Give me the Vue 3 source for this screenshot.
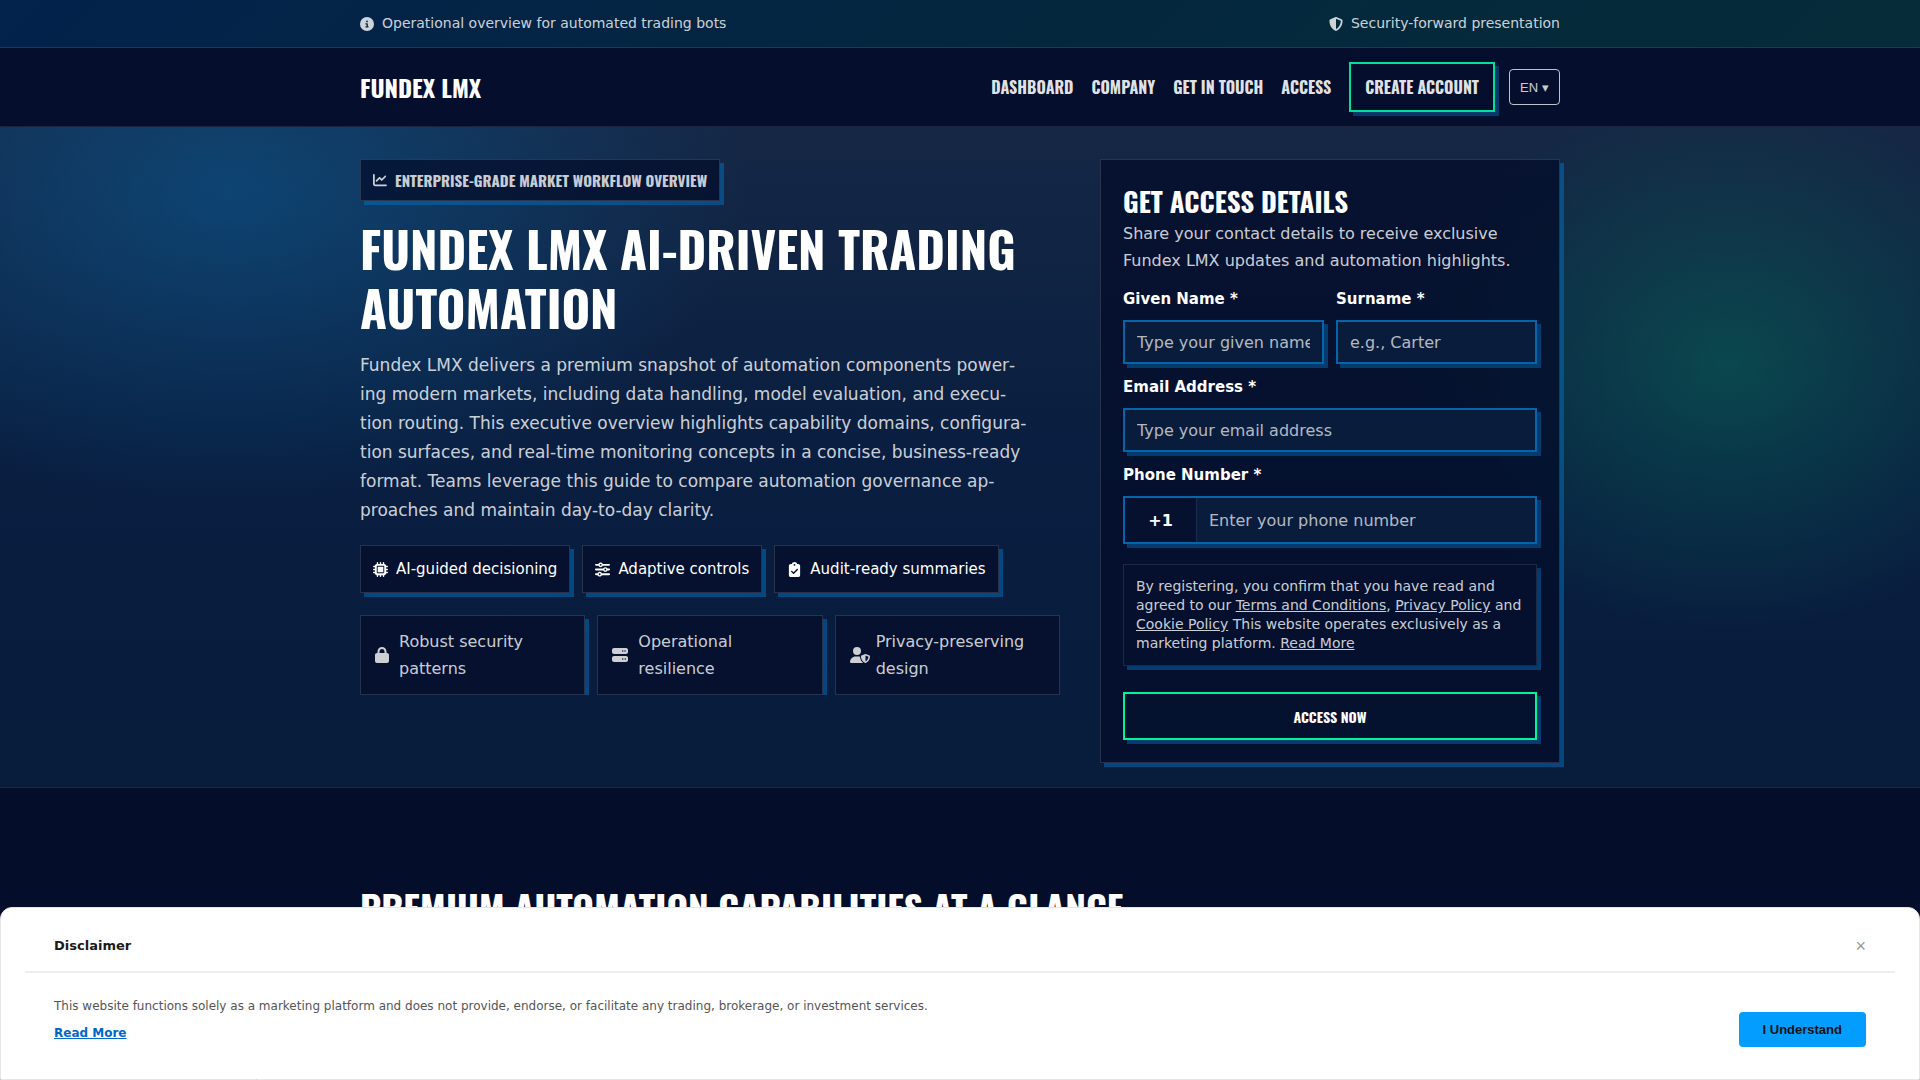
<template>
  <div class="page">
    <div class="topbar">
      <div class="container topbar__inner">
        <span class="topbar__item">
          <svg class="topbar__icon" viewBox="0 0 512 512" aria-hidden="true"><path :d="icons.info" /></svg>
          Operational overview for automated trading bots
        </span>
        <span class="topbar__item">
          <svg class="topbar__icon" viewBox="0 0 512 512" aria-hidden="true"><path :d="icons.shield" /></svg>
          Security-forward presentation
        </span>
      </div>
    </div>

    <header class="header">
      <div class="container header__inner">
        <a class="header__brand" href="#">Fundex LMX</a>
        <nav class="nav" aria-label="Main">
          <a v-for="link in navLinks" :key="link" class="nav__link" href="#">{{ link }}</a>
          <a class="nav__cta" href="#access">Create account</a>
          <select v-model="locale" class="nav__lang" aria-label="Language">
            <option value="en">EN ▾</option>
          </select>
        </nav>
      </div>
    </header>

    <main>
      <section class="hero">
        <div class="container hero__grid">
          <div class="intro">
            <span class="intro__badge">
              <svg class="intro__badge-icon" viewBox="0 0 512 512" aria-hidden="true"><path :d="icons.chart" /></svg>
              Enterprise-grade market workflow overview
            </span>
            <h1 class="intro__title">Fundex LMX AI-Driven Trading Automation</h1>
            <p class="intro__text">
              Fundex LMX delivers a premium snapshot of automation components power&shy;ing modern markets,
              including data handling, model evaluation, and execu&shy;tion routing. This executive overview
              highlights capability domains, configura&shy;tion surfaces, and real-time monitoring concepts in a
              concise, business-ready format. Teams leverage this guide to compare automation governance
              ap&shy;proaches and maintain day-to-day clarity.
            </p>

            <ul class="tags">
              <li v-for="tag in tags" :key="tag.label" class="tags__item">
                <svg class="tags__icon" :viewBox="tag.box" aria-hidden="true"><path :d="tag.path" /></svg>
                {{ tag.label }}
              </li>
            </ul>

            <ul class="assurances">
              <li v-for="item in assurances" :key="item.label" class="assurances__item">
                <svg
                  class="assurances__icon"
                  :class="`assurances__icon--${item.size}`"
                  :viewBox="item.box"
                  aria-hidden="true"
                ><path :d="item.path" /></svg>
                <span>{{ item.label }}</span>
              </li>
            </ul>
          </div>

          <div id="access" class="card">
            <h2 class="card__title">Get Access Details</h2>
            <p class="card__text">Share your contact details to receive exclusive Fundex LMX updates and automation highlights.</p>

            <form class="form" @submit.prevent>
              <div class="form__row">
                <div class="field">
                  <label class="field__label" for="first-name">Given Name *</label>
                  <input id="first-name" v-model="form.firstName" class="field__input" type="text" placeholder="Type your given name" />
                </div>
                <div class="field">
                  <label class="field__label" for="last-name">Surname *</label>
                  <input id="last-name" v-model="form.lastName" class="field__input" type="text" placeholder="e.g., Carter" />
                </div>
              </div>
              <div class="field">
                <label class="field__label" for="email">Email Address *</label>
                <input id="email" v-model="form.email" class="field__input" type="email" placeholder="Type your email address" />
              </div>
              <div class="field">
                <label class="field__label" for="phone">Phone Number *</label>
                <div class="phone">
                  <span class="phone__code">+1</span>
                  <input id="phone" v-model="form.phone" class="phone__input" type="tel" placeholder="Enter your phone number" />
                </div>
              </div>

              <p class="consent">
                By registering, you confirm that you have read and agreed to our
                <a href="#">Terms and Conditions</a>, <a href="#">Privacy Policy</a> and
                <a href="#">Cookie Policy</a> This website operates exclusively as a marketing platform.
                <a href="#">Read More</a>
              </p>

              <button class="form__submit" type="submit">Access now</button>
            </form>
          </div>
        </div>
      </section>

      <section class="features">
        <div class="container">
          <h2 class="features__title">Premium automation capabilities at a glance</h2>
        </div>
      </section>
    </main>

    <aside v-if="showDisclaimer" class="disclaimer" aria-labelledby="disclaimer-title">
      <div class="disclaimer__head">
        <strong id="disclaimer-title" class="disclaimer__title">Disclaimer</strong>
        <button class="disclaimer__close" type="button" aria-label="Close" @click="showDisclaimer = false">×</button>
      </div>
      <div class="disclaimer__body">
        <div>
          <p class="disclaimer__text">
            This website functions solely as a marketing platform and does not provide, endorse, or facilitate any
            trading, brokerage, or investment services.
          </p>
          <a class="disclaimer__more" href="#">Read More</a>
        </div>
        <button class="disclaimer__accept" type="button" @click="showDisclaimer = false">I Understand</button>
      </div>
    </aside>
  </div>
</template>

<script setup>
import { reactive, ref } from 'vue'

const icons = {
  info: 'M256 512A256 256 0 1 0 256 0a256 256 0 1 0 0 512zM216 336h24V272H216c-13.3 0-24-10.7-24-24s10.7-24 24-24h48c13.3 0 24 10.7 24 24v88h8c13.3 0 24 10.7 24 24s-10.7 24-24 24H216c-13.3 0-24-10.7-24-24s10.7-24 24-24zm40-208a32 32 0 1 1 0 64 32 32 0 1 1 0-64z',
  shield: 'M256 0c4.6 0 9.2 1 13.4 2.9L457.7 82.8c22 9.3 38.4 31 38.3 57.2c-.5 99.2-41.3 280.7-213.6 363.2c-16.7 8-36.1 8-52.8 0C57.3 420.7 16.5 239.2 16 140c-.1-26.2 16.3-47.9 38.3-57.2L242.7 2.9C246.8 1 251.4 0 256 0zm0 66.8V444.8C394 378 431.1 230.1 432 141.4L256 66.8z',
  chart: 'M64 64c0-17.7-14.3-32-32-32S0 46.3 0 64V400c0 44.2 35.8 80 80 80H480c17.7 0 32-14.3 32-32s-14.3-32-32-32H80c-8.8 0-16-7.2-16-16V64zm406.6 86.6c12.5-12.5 12.5-32.8 0-45.3s-32.8-12.5-45.3 0L320 210.7l-57.4-57.4c-12.5-12.5-32.8-12.5-45.3 0l-112 112c-12.5 12.5-12.5 32.8 0 45.3s32.8 12.5 45.3 0L240 221.3l57.4 57.4c12.5 12.5 32.8 12.5 45.3 0l128-128z'
}

const navLinks = ['Dashboard', 'Company', 'Get in touch', 'Access']

const tags = [
  {
    label: 'AI-guided decisioning',
    box: '0 0 512 512',
    path: 'M176 24c0-13.3-10.7-24-24-24s-24 10.7-24 24V64c-35.3 0-64 28.7-64 64H24c-13.3 0-24 10.7-24 24s10.7 24 24 24H64v56H24c-13.3 0-24 10.7-24 24s10.7 24 24 24H64v56H24c-13.3 0-24 10.7-24 24s10.7 24 24 24H64c0 35.3 28.7 64 64 64v40c0 13.3 10.7 24 24 24s24-10.7 24-24V448h56v40c0 13.3 10.7 24 24 24s24-10.7 24-24V448h56v40c0 13.3 10.7 24 24 24s24-10.7 24-24V448c35.3 0 64-28.7 64-64h40c13.3 0 24-10.7 24-24s-10.7-24-24-24H448V280h40c13.3 0 24-10.7 24-24s-10.7-24-24-24H448V176h40c13.3 0 24-10.7 24-24s-10.7-24-24-24H448c0-35.3-28.7-64-64-64V24c0-13.3-10.7-24-24-24s-24 10.7-24 24V64H280V24c0-13.3-10.7-24-24-24s-24 10.7-24 24V64H176V24zM160 128H352c17.7 0 32 14.3 32 32V352c0 17.7-14.3 32-32 32H160c-17.7 0-32-14.3-32-32V160c0-17.7 14.3-32 32-32zm192 32H160V352H352V160z'
  },
  {
    label: 'Adaptive controls',
    box: '0 0 512 512',
    path: 'M0 416c0 17.7 14.3 32 32 32l54.7 0c12.3 28.3 40.5 48 73.3 48s61-19.7 73.3-48L480 448c17.7 0 32-14.3 32-32s-14.3-32-32-32l-246.7 0c-12.3-28.3-40.5-48-73.3-48s-61 19.7-73.3 48L32 384c-17.7 0-32 14.3-32 32zm128 0a32 32 0 1 1 64 0 32 32 0 1 1 -64 0zM320 256a32 32 0 1 1 64 0 32 32 0 1 1 -64 0zm32-80c-32.8 0-61 19.7-73.3 48L32 224c-17.7 0-32 14.3-32 32s14.3 32 32 32l246.7 0c12.3 28.3 40.5 48 73.3 48s61-19.7 73.3-48l54.7 0c17.7 0 32-14.3 32-32s-14.3-32-32-32l-54.7 0c-12.3-28.3-40.5-48-73.3-48zM192 128a32 32 0 1 1 0-64 32 32 0 1 1 0 64zm73.3-64C253 35.7 224.8 16 192 16s-61 19.7-73.3 48L32 64C14.3 64 0 78.3 0 96s14.3 32 32 32l86.7 0c12.3 28.3 40.5 48 73.3 48s61-19.7 73.3-48L480 128c17.7 0 32-14.3 32-32s-14.3-32-32-32L265.3 64z'
  },
  {
    label: 'Audit-ready summaries',
    box: '0 0 384 512',
    path: 'M192 0c-41.8 0-77.4 26.7-90.5 64H64C28.7 64 0 92.7 0 128V448c0 35.3 28.7 64 64 64H320c35.3 0 64-28.7 64-64V128c0-35.3-28.7-64-64-64H282.5C269.4 26.7 233.8 0 192 0zm0 64a32 32 0 1 1 0 64 32 32 0 1 1 0-64zM305 273L177 401c-9.4 9.4-24.6 9.4-33.9 0L79 337c-9.4-9.4-9.4-24.6 0-33.9s24.6-9.4 33.9 0l47 47L271 239c9.4-9.4 24.6-9.4 33.9 0s9.4 24.6 0 33.9z'
  }
]

const assurances = [
  {
    label: 'Robust security patterns',
    size: 'narrow',
    box: '0 0 448 512',
    path: 'M144 144v48H304V144c0-44.2-35.8-80-80-80s-80 35.8-80 80zM80 192V144C80 64.5 144.5 0 224 0s144 64.5 144 144v48h16c35.3 0 64 28.7 64 64V448c0 35.3-28.7 64-64 64H64c-35.3 0-64-28.7-64-64V256c0-35.3 28.7-64 64-64H80z'
  },
  {
    label: 'Operational resilience',
    size: 'regular',
    box: '0 0 512 512',
    path: 'M64 32C28.7 32 0 60.7 0 96v64c0 35.3 28.7 64 64 64H448c35.3 0 64-28.7 64-64V96c0-35.3-28.7-64-64-64H64zm280 72a24 24 0 1 1 0 48 24 24 0 1 1 0-48zm48 24a24 24 0 1 1 48 0 24 24 0 1 1 -48 0zM64 288c-35.3 0-64 28.7-64 64v64c0 35.3 28.7 64 64 64H448c35.3 0 64-28.7 64-64V352c0-35.3-28.7-64-64-64H64zm280 72a24 24 0 1 1 0 48 24 24 0 1 1 0-48zm56 24a24 24 0 1 1 48 0 24 24 0 1 1 -48 0z'
  },
  {
    label: 'Privacy-preserving design',
    size: 'wide',
    box: '0 0 640 512',
    path: 'M224 256A128 128 0 1 0 224 0a128 128 0 1 0 0 256zm-45.7 48C79.8 304 0 383.8 0 482.3C0 498.7 13.3 512 29.7 512H418.3c1.8 0 3.5-.2 5.3-.5c-76.3-55.1-99.8-141-103.1-200.2c-16.1-4.8-33.1-7.3-50.7-7.3H178.3zm308.8-78.3l-120 48C358 277.4 352 286.2 352 296c0 63.3 25.9 168.8 134.8 214.2c5.9 2.5 12.6 2.5 18.5 0C614.1 464.8 640 359.3 640 296c0-9.8-6-18.6-15.1-22.3l-120-48c-5.7-2.3-12.1-2.3-17.8 0zM591.4 312c-3.9 50.7-27.2 116.7-95.4 149.7V273.8L591.4 312z'
  }
]

const locale = ref('en')
const showDisclaimer = ref(true)

const form = reactive({
  firstName: '',
  lastName: '',
  email: '',
  phone: ''
})
</script>

<style>
body {
  margin: 0;
  background: #040e2b;
}
</style>

<style scoped>
.page {
  --font-body: 'DejaVu Sans', sans-serif;
  --font-head: 'Oswald', 'Liberation Sans Narrow', 'Arial Narrow', sans-serif;
  --line: rgba(255, 255, 255, 0.14);
  --muted: rgba(255, 255, 255, 0.8);
  --panel: rgba(4, 14, 43, 0.75);
  --blue: #0466a8;
  --green: #00f59b;
  --shadow: 4px 4px 0 rgba(0, 120, 200, 0.48);
  min-height: 100vh;
  font-family: var(--font-body);
  font-size: 16px;
  line-height: 27px;
  color: #fff;
}

*,
*::before,
*::after {
  box-sizing: border-box;
}

h1,
h2,
p,
ul {
  margin: 0;
  padding: 0;
}

ul {
  list-style: none;
}

a {
  color: inherit;
}

svg {
  flex: none;
  fill: currentColor;
}

.container {
  max-width: 1248px;
  margin: 0 auto;
  padding: 0 24px;
}

/* Top bar */
.topbar {
  border-bottom: 1px solid #1d3a50;
  background: linear-gradient(135deg, #03224c, #042640 45%, #052c38);
}

.topbar__inner {
  display: flex;
  justify-content: space-between;
  padding-top: 10px;
  padding-bottom: 10px;
}

.topbar__item {
  display: flex;
  align-items: center;
  gap: 8px;
  font-size: 14px;
  color: var(--muted);
}

.topbar__icon {
  width: 14px;
  height: 14px;
}

/* Header */
.header {
  border-bottom: 1px solid #1c2440;
  background: #050f2d;
}

.header__inner {
  display: flex;
  align-items: center;
  justify-content: space-between;
  padding-top: 14px;
  padding-bottom: 14px;
}

.header__brand,
.nav__link,
.nav__cta {
  font-family: var(--font-head);
  font-weight: 700;
  text-transform: uppercase;
  text-decoration: none;
}

.header__brand {
  font-size: 24px;
}

.nav {
  display: flex;
  align-items: center;
  gap: 18px;
}

.nav__link,
.nav__cta {
  font-size: 16px;
  color: rgba(255, 255, 255, 0.9);
}

.nav__cta {
  padding: 10px 14px;
  border: 2px solid #00e09a;
  line-height: 26px;
  box-shadow: 4px 4px 0 #06396b;
}

.nav__lang {
  height: 36px;
  margin-left: -4px;
  padding: 0 10px;
  border: 1px solid rgba(255, 255, 255, 0.75);
  border-radius: 4px;
  appearance: none;
  background: transparent;
  font-family: 'Liberation Sans', Arial, sans-serif;
  font-size: 13px;
  color: var(--muted);
}

/* Hero */
.hero {
  padding: 32px 0 24px;
  border-bottom: 1px solid #1b2745;
  background:
    radial-gradient(520px 320px at 12% 10%, rgba(8, 98, 160, 0.5), transparent),
    radial-gradient(340px 270px at 90% 36%, rgba(8, 110, 90, 0.5), transparent),
    linear-gradient(180deg, #152745, #091e40 50%, #081c3c);
}

.hero__grid {
  display: grid;
  grid-template-columns: minmax(0, 1fr) 460px;
  gap: 40px;
  align-items: start;
}

.intro {
  display: flex;
  flex-direction: column;
  align-items: flex-start;
}

.intro__badge {
  display: flex;
  align-items: center;
  gap: 8px;
  padding: 8px 12px;
  border: 1px solid var(--line);
  background: var(--panel);
  box-shadow: var(--shadow);
  font-family: var(--font-head);
  font-size: 15px;
  font-weight: 700;
  line-height: 24px;
  text-transform: uppercase;
  color: var(--muted);
}

.intro__badge-icon {
  width: 14px;
  height: 14px;
}

.intro__title {
  margin: 18px 0 14px;
  font-family: var(--font-head);
  font-size: 49px;
  font-weight: 700;
  line-height: 59px;
  text-transform: uppercase;
}

.intro__text {
  max-width: 672px;
  font-size: 17px;
  line-height: 29px;
  color: var(--muted);
}

.tags {
  display: flex;
  flex-wrap: wrap;
  gap: 12px;
  margin-top: 20px;
}

.tags__item {
  display: flex;
  align-items: center;
  gap: 8px;
  padding: 10px 12px;
  border: 1px solid var(--line);
  background: var(--panel);
  box-shadow: var(--shadow);
  font-size: 15px;
  line-height: 26px;
}

.tags__icon {
  width: 15px;
  height: 15px;
}

.assurances {
  display: grid;
  grid-template-columns: repeat(3, 1fr);
  gap: 12px;
  align-self: stretch;
  margin-top: 22px;
  overflow: hidden;
}

.assurances__item {
  display: flex;
  align-items: center;
  gap: 10px;
  padding: 12px 14px;
  border: 1px solid var(--line);
  background: var(--panel);
  box-shadow: var(--shadow);
  color: var(--muted);
}

.assurances__icon {
  height: 16px;
}

.assurances__icon--narrow {
  width: 14px;
}

.assurances__icon--regular {
  width: 16px;
}

.assurances__icon--wide {
  width: 20px;
  margin-right: -4px;
}

/* Form card */
.card {
  padding: 22px;
  border: 1px solid var(--line);
  background: rgba(4, 14, 43, 0.8);
  box-shadow: var(--shadow);
}

.card__title {
  font-family: var(--font-head);
  font-size: 27px;
  font-weight: 700;
  line-height: 38px;
  text-transform: uppercase;
}

.card__text {
  color: var(--muted);
}

.form {
  display: flex;
  flex-direction: column;
  gap: 10px;
  margin-top: 12px;
}

.form__row {
  display: grid;
  grid-template-columns: repeat(2, minmax(0, 1fr));
  gap: 12px;
}

.field {
  display: flex;
  flex-direction: column;
  gap: 8px;
}

.field__label {
  font-size: 15px;
  font-weight: 700;
  line-height: 26px;
}

.field__input,
.phone {
  border: 2px solid var(--blue);
  background: #091c3c;
  box-shadow: 4px 4px 0 #043c70;
}

.field__input,
.phone__input {
  width: 100%;
  padding: 0 12px;
  font-family: var(--font-body);
  font-size: 16px;
  color: #fff;
}

.field__input {
  height: 44px;
}

.field__input::placeholder,
.phone__input::placeholder {
  color: rgba(255, 255, 255, 0.7);
  opacity: 1;
}

.phone {
  display: flex;
  height: 48px;
}

.phone__code {
  flex: none;
  display: flex;
  align-items: center;
  justify-content: center;
  width: 72px;
  border-right: 1px solid #1d2c4b;
  background: #05112f;
  font-weight: 700;
}

.phone__input {
  flex: 1;
  min-width: 0;
  border: 0;
  background: transparent;
}

.consent {
  margin-top: 10px;
  padding: 12px 12px 12px;
  border: 1px solid #1e2843;
  background: #04102e;
  box-shadow: 4px 4px 0 #043c70;
  font-size: 14px;
  line-height: 19px;
  color: var(--muted);
}

.form__submit {
  height: 48px;
  margin-top: 16px;
  border: 2px solid var(--green);
  background: #04112f;
  box-shadow: 4px 4px 0 #043c70;
  font-family: var(--font-head);
  font-size: 14px;
  font-weight: 700;
  text-transform: uppercase;
  color: #fff;
}

/* Features */
.features {
  padding: 96px 0 64px;
}

.features__title {
  font-family: var(--font-head);
  font-size: 37px;
  font-weight: 700;
  line-height: 48px;
  text-transform: uppercase;
}

/* Disclaimer bar */
.disclaimer {
  position: fixed;
  right: 0;
  bottom: 0;
  left: 0;
  padding: 24px;
  border: 1px solid #e6e6e6;
  border-radius: 12px 12px 0 0;
  background: #fff;
  color: #1a1a1a;
}

.disclaimer__head,
.disclaimer__body {
  display: flex;
  justify-content: space-between;
  padding: 0 29px;
}

.disclaimer__head {
  align-items: center;
  padding-bottom: 12px;
  border-bottom: 2px solid #eee;
}

.disclaimer__title {
  font-size: 13px;
}

.disclaimer__close {
  padding: 0;
  border: 0;
  background: none;
  font-family: 'Liberation Sans', Arial, sans-serif;
  font-size: 18px;
  line-height: 24px;
  color: #999;
}

.disclaimer__body {
  align-items: flex-end;
  padding-top: 20px;
  padding-bottom: 8px;
  font-size: 12px;
}

.disclaimer__text {
  color: #555;
}

.disclaimer__more {
  font-weight: 700;
  color: #06c;
}

.disclaimer__accept {
  height: 35px;
  padding: 0 24px;
  border: 0;
  border-radius: 4px;
  background: #039dff;
  font-family: 'Liberation Sans', Arial, sans-serif;
  font-size: 13px;
  font-weight: 700;
  color: #111;
}

@media (max-width: 1100px) {
  .hero__grid {
    grid-template-columns: minmax(0, 1fr);
  }

  .header__inner,
  .nav {
    flex-wrap: wrap;
  }
}
</style>
